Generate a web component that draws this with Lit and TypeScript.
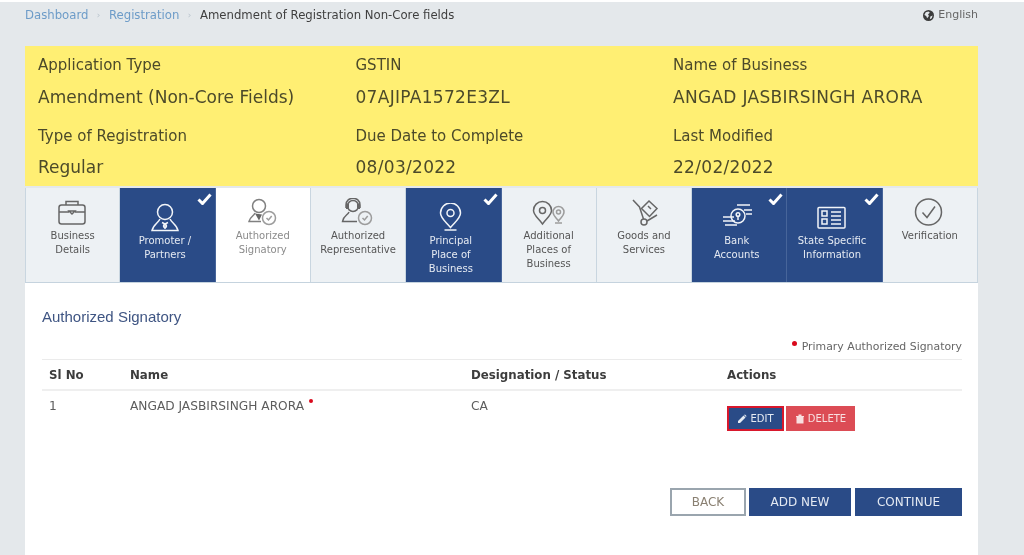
import { LitElement, html, css, svg } from "lit";
import { customElement } from "lit/decorators.js";

const icons: Record<string, unknown> = {
  case: svg`<rect x="6" y="7" width="26" height="19" rx="2.5"/><path d="M13 7V3.500h12V7M6 14h10M22 14h10M16 13h6l-3 3z"/>`,
  promoter: svg`<circle cx="17" cy="9" r="7.500"/><path d="M12 16C10 20 5 22 4 27.500h26c-1-5.500-6-7.500-8-11.500"/><path d="M14 19.500l3 1.500 3-1.500M17 21v5"/><circle cx="17" cy="23" r="1.500"/>`,
  signatory: svg`<circle cx="16" cy="8" r="6.500"/><path d="M12 15c-1 3-5 3.500-6 8.500h12"/><path class="fill" d="M12 15.500l4 7 3-6z"/><circle class="soft" cx="26" cy="20" r="6.500"/><path class="soft" d="M23.500 20l2 2 3.200-4"/>`,
  rep: svg`<circle cx="15" cy="8" r="5.500"/><path d="M8 10V7c0-9 14-9 14 0v3M11 14c-1 3-6 4-6.500 9.500H19"/><path class="fill" d="M8 6h3v5H8zM19 6h3v5h-3z"/><circle class="soft" cx="27" cy="20" r="6.500"/><path class="soft" d="M24.500 20l2 2 3.200-4"/>`,
  pin: svg`<path d="M16.500 24.500C11 18 6.500 15 6.500 10a10 10 0 0 1 20 0c0 5-4.500 8-10 14.500z"/><circle cx="16.500" cy="10" r="3.500"/><path d="M10.500 27h12"/>`,
  pins: svg`<path d="M13.500 26C9 20 4.500 17 4.500 12.500a9 9 0 0 1 18 0C22.500 17 18 20 13.500 26z"/><circle cx="13.500" cy="12.500" r="3"/><path class="soft" d="M29.500 23C27 19.500 24 17.500 24 14a5.500 5.500 0 0 1 11 0c0 3.500-3 5.500-5.500 9z"/><circle class="soft" cx="29.500" cy="14" r="2"/><path class="soft" d="M26 25h7"/>`,
  trolley: svg`<path d="M9 2l6.500 7 4 12"/><circle cx="20" cy="24" r="3"/><path d="M23 23l10-6"/><path d="M25 3l8 7.500-7.500 8-8-8z"/><path d="M24 8l3 3"/>`,
  bank: svg`<circle cx="18" cy="13" r="7"/><circle cx="18" cy="11.500" r="1.800"/><path d="M18 13v4M17 2h13M24 7h8M26 11h6M3 14h11M3 18h12M5 22h12"/>`,
  state: svg`<rect x="3" y="4.500" width="27" height="20.500" rx="1"/><rect x="7" y="8" width="5" height="5"/><rect x="7" y="16" width="5" height="5"/><path d="M16 9h10M16 13h10M16 17h10M16 21h10"/>`,
  verify: svg`<circle cx="18.500" cy="14" r="13"/><path d="M12.500 14.500l4.500 5 8-11"/>`,
};

const tabs = [
  { label: ["Business", "Details"], icon: "case" },
  { label: ["Promoter /", "Partners"], icon: "promoter", active: true },
  { label: ["Authorized", "Signatory"], icon: "signatory", current: true },
  { label: ["Authorized", "Representative"], icon: "rep" },
  { label: ["Principal", "Place of", "Business"], icon: "pin", active: true },
  { label: ["Additional", "Places of", "Business"], icon: "pins" },
  { label: ["Goods and", "Services"], icon: "trolley" },
  { label: ["Bank", "Accounts"], icon: "bank", active: true },
  { label: ["State Specific", "Information"], icon: "state", active: true },
  { label: ["Verification"], icon: "verify" },
];

const info = [
  ["Application Type", "Amendment (Non-Core Fields)"],
  ["GSTIN", "07AJIPA1572E3ZL"],
  ["Name of Business", "ANGAD JASBIRSINGH ARORA"],
  ["Type of Registration", "Regular"],
  ["Due Date to Complete", "08/03/2022"],
  ["Last Modified", "22/02/2022"],
];

@customElement("app-root")
export class AppRoot extends LitElement {
  static styles = css`
    :host {
      display: block;
      height: 555px;
      overflow: hidden;
      background: #e4e8eb;
      font-family: "DejaVu Sans", Verdana, sans-serif;
      color: #4a4a4a;
    }
    .page {
      filter: blur(0.5px);
      border-top: 2px solid #fff;
      padding: 0 46px 0 25px;
    }
    .crumbs {
      height: 44px;
      display: flex;
      align-items: flex-start;
      padding-top: 6px;
      box-sizing: border-box;
      font-size: 11.700px;
      line-height: 14px;
      color: #3f3f3f;
    }
    .crumbs a { color: #6d9cc8; }
    .crumbs .sep { color: #b9c4cc; width: 20.500px; text-align: center; font-size: 9px; }
    .lang { margin-left: auto; display: flex; align-items: center; gap: 4px; color: #666; font-size: 11px; }
    .lang svg { width: 11px; height: 11px; }
    .info {
      background: #ffef73;
      height: 140px;
      box-sizing: border-box;
      padding: 10px 0 0 13px;
      display: grid;
      grid-template-columns: repeat(3, 317.500px);
      grid-template-rows: 71px 69px;
      color: #4c4a2a;
    }
    .info .k { font-size: 15px; line-height: 18px; }
    .info .v { font-size: 17px; line-height: 20px; margin-top: 13px; }
    .info .v.caps { letter-spacing: 0.3px; }
    .info .b .v { margin-top: 12px; }
    .tabs {
      margin-top: 2px;
      display: grid;
      grid-template-columns: repeat(10, 1fr);
      height: 95px;
      background: #edf1f4;
      border-bottom: 1px solid #c5d3de;
      box-sizing: border-box;
    }
    .tab {
      position: relative;
      box-sizing: border-box;
      padding-top: 10px;
      display: flex;
      flex-direction: column;
      align-items: center;
      border-right: 1px solid #c9d6e0;
      font-size: 10px;
      line-height: 14px;
      text-align: center;
      color: #555;
      white-space: nowrap;
    }
    .tab:first-child { border-left: 1px solid #c9d6e0; }
    .tab svg.ic {
      width: 40px;
      height: 29px;
      fill: none;
      stroke: #666;
      stroke-width: 1.500;
      flex: none;
      margin-bottom: 2px;
    }
    .tab svg.ic .fill { fill: #666; stroke: none; }
    .tab svg.ic .soft { stroke: #9c9c9c; }
    .tab.current { background: #fff; color: #8b8b8b; }
    .tab.current svg.ic { stroke: #808080; }
    .tab.active {
      background: #2a4b87;
      color: #e5eaf2;
      padding: 15px 5px 0 0;
      border-right-color: #47659a;
    }
    .tab.active svg.ic { stroke: #f2f5f9; margin-left: 6px; }
    .tick {
      position: absolute;
      top: 5px;
      right: 3px;
      width: 15px;
      height: 12px;
      fill: none;
      stroke: #fff;
      stroke-width: 3;
    }
    .panel {
      background: #fff;
      height: 272px;
      box-sizing: border-box;
      padding: 24px 16px 0 17px;
    }
    h2 {
      margin: 0;
      font: 400 15px/20px "Liberation Sans", Arial, sans-serif;
      color: #3f5583;
    }
    .legend {
      margin-top: 10px;
      height: 18px;
      display: flex;
      justify-content: flex-end;
      align-items: center;
      gap: 5px;
      font-size: 10.900px;
      color: #666;
    }
    .dot { width: 5px; height: 5px; border-radius: 50%; background: #d9091c; display: inline-block; }
    .legend .dot { margin-top: -5px; }
    .row {
      display: grid;
      grid-template-columns: 81px 341px 256px 1fr;
      padding-left: 7px;
    }
    .head {
      margin-top: 4px;
      height: 32px;
      align-items: center;
      border-top: 1px solid #ebebeb;
      border-bottom: 2px solid #efefef;
      box-sizing: border-box;
      font-size: 11.800px;
      font-weight: 700;
      color: #3d3d3d;
    }
    .body { font-size: 12.200px; color: #5d5d5d; padding-top: 8px; line-height: 14px; }
    .body .dot { width: 4px; height: 4px; margin-left: 5px; vertical-align: 7px; }
    .actions { display: flex; gap: 2px; align-items: flex-start; margin-top: 7px; }
    .sm {
      height: 25px;
      box-sizing: border-box;
      display: flex;
      align-items: center;
      justify-content: center;
      gap: 3px;
      color: #e6ebf3;
      font-size: 10px;
    }
    .sm svg { width: 10px; height: 10px; fill: currentColor; }
    .edit { width: 57px; background: #2a4b87; border: 2px solid #d8172c; }
    .delete { width: 69px; background: #dc4c55; color: #f8dfe0; }
    .foot {
      margin-top: 57px;
      display: flex;
      justify-content: flex-end;
      gap: 3px;
    }
    .btn {
      height: 28px;
      box-sizing: border-box;
      display: flex;
      align-items: center;
      justify-content: center;
      font-size: 12px;
      color: #e3e9f2;
      background: #2a4b87;
    }
    .back { width: 76px; background: #fff; border: 2px solid #9aa5ae; color: #8a8072; }
    .add { width: 102px; }
    .cont { width: 107px; margin-left: 1px; }
  `;

  render() {
    return html`
      <div class="page">
        <div class="crumbs">
          <a>Dashboard</a><span class="sep">›</span><a>Registration</a><span class="sep">›</span>
          <span>Amendment of Registration Non-Core fields</span>
          <span class="lang">
            <svg viewBox="0 0 12 12"><circle cx="6" cy="6" r="6" fill="#3c3c3c"/><path d="M3 2.500l3-1 1.500 1.500-2 1.500 1 2-2 2.500-1-2.500-2-1zM8 7l2.500-1-1 3-2 1z" fill="#e4e8eb"/></svg>
            English
          </span>
        </div>
        <div class="info">
          ${info.map(([k, v], i) => html`<div class=${i > 2 ? "b" : ""}><div class="k">${k}</div><div class="v ${/[a-z]/.test(v) ? "" : "caps"}">${v}</div></div>`)}
        </div>
        <div class="tabs">
          ${tabs.map(
            (t) => html`<div class="tab ${t.active ? "active" : ""} ${t.current ? "current" : ""}">
              <svg class="ic" viewBox="0 0 40 29">${icons[t.icon]}</svg>
              ${t.label.map((l) => html`<div>${l}</div>`)}
              ${t.active ? html`<svg class="tick" viewBox="0 0 15 12"><path d="M1.500 6.500l4 4 8-9"/></svg>` : ""}
            </div>`
          )}
        </div>
        <div class="panel">
          <h2>Authorized Signatory</h2>
          <div class="legend"><span class="dot"></span><span>Primary Authorized Signatory</span></div>
          <div class="row head"><div>Sl No</div><div>Name</div><div>Designation / Status</div><div>Actions</div></div>
          <div class="row body">
            <div>1</div>
            <div>ANGAD JASBIRSINGH ARORA<span class="dot"></span></div>
            <div>CA</div>
            <div class="actions">
              <div class="sm edit"><svg viewBox="0 0 10 10"><path d="M1 7l5.500-5.500 2 2L3 9H1zM7 1l1-.500 1.500 1.500-.500 1z"/></svg>EDIT</div>
              <div class="sm delete"><svg viewBox="0 0 10 10"><path d="M1 2h8v1H8.500v6.500h-7V3H1zM3.500 .500h3V2h-3z"/></svg>DELETE</div>
            </div>
          </div>
          <div class="foot">
            <div class="btn back">BACK</div>
            <div class="btn add">ADD NEW</div>
            <div class="btn cont">CONTINUE</div>
          </div>
        </div>
      </div>
    `;
  }
}
